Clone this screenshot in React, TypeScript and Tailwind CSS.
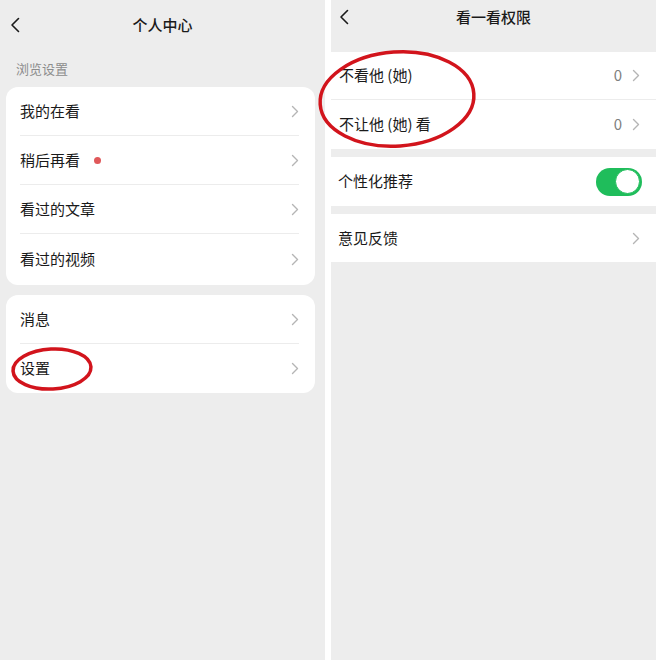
import React from 'react';

const font = { fontFamily: '"Noto Sans CJK SC", "Noto Sans", sans-serif' };

const Chevron: React.FC = () => (
  <svg width="8" height="13" viewBox="0 0 8 13" fill="none">
    <path d="M1.5 1.5 L6.5 6.5 L1.5 11.5" stroke="#b5b5b5" strokeWidth="1.4" strokeLinecap="round" strokeLinejoin="round" />
  </svg>
);

const BackArrow: React.FC = () => (
  <svg width="10" height="16" viewBox="0 0 10 16" fill="none">
    <path d="M8.5 1.5 L2 8 L8.5 14.5" stroke="#1a1a1a" strokeWidth="1.6" strokeLinecap="round" strokeLinejoin="round" />
  </svg>
);

const Row: React.FC<{ label: string; dot?: boolean; last?: boolean; h?: string }> = ({ label, dot, last, h = 'h-[49px]' }) => (
  <div className={`${h} flex items-center pl-[14px] pr-[16px]`}>
    <div className={`flex-1 h-full flex items-center ${last ? '' : 'border-b border-[#ececec]'}`}>
      <span className="text-[15px] text-[#1a1a1a]">{label}</span>
      {dot && <span className="ml-[14px] w-[7px] h-[7px] rounded-full bg-[#e0585a]" />}
      <span className="ml-auto pr-[0px]">
        <Chevron />
      </span>
    </div>
  </div>
);

const LeftPanel: React.FC = () => (
  <div className="w-[325px] h-full bg-[#ededed] flex flex-col">
    <div className="h-[50px] relative flex items-center justify-center">
      <span className="absolute left-[10px] top-[17px]">
        <BackArrow />
      </span>
      <span className="text-[15px] font-medium text-[#1a1a1a]">个人中心</span>
    </div>
    <div className="h-[37px] flex items-center pl-[16px] text-[13px] text-[#8c8c8c]">浏览设置</div>
    <div className="ml-[6px] w-[309px] bg-white rounded-[12px]">
      <Row label="我的在看" />
      <Row label="稍后再看" dot />
      <Row label="看过的文章" />
      <Row label="看过的视频" last h="h-[51px]" />
    </div>
    <div className="mt-[10px] ml-[6px] w-[309px] bg-white rounded-[12px]">
      <Row label="消息" />
      <Row label="设置" last />
    </div>
  </div>
);

const Toggle: React.FC = () => (
  <div className="w-[46px] h-[28px] rounded-full bg-[#1fbd5b] flex items-center justify-end pr-[2px]">
    <div className="w-[25px] h-[25px] rounded-full bg-white border-[1.5px] border-[#1fbd5b]" />
  </div>
);

const RightPanel: React.FC = () => (
  <div className="w-[325px] h-full bg-[#ededed] flex flex-col">
    <div className="h-[52px] relative">
      <span className="absolute left-[8px] top-[9px]">
        <BackArrow />
      </span>
      <div className="h-[34px] flex items-center justify-center text-[15px] font-medium text-[#1a1a1a]">看一看权限</div>
    </div>
    <div className="bg-white">
      <div className="h-[48px] pl-[8px] flex items-center border-b border-[#ececec]">
        <span className="text-[15px] text-[#1a1a1a]">不看他 (她)</span>
        <span className="ml-auto text-[15px] text-[#808080] mr-[10px]">0</span>
        <span className="mr-[16px]"><Chevron /></span>
      </div>
      <div className="h-[49px] pl-[8px] flex items-center">
        <span className="text-[15px] text-[#1a1a1a]">不让他 (她) 看</span>
        <span className="ml-auto text-[15px] text-[#808080] mr-[10px]">0</span>
        <span className="mr-[16px]"><Chevron /></span>
      </div>
    </div>
    <div className="mt-[8px] bg-white h-[49px] pl-[7px] pr-[14px] flex items-center">
      <span className="text-[15px] text-[#1a1a1a]">个性化推荐</span>
      <span className="ml-auto"><Toggle /></span>
    </div>
    <div className="mt-[8px] bg-white h-[48px] pl-[7px] flex items-center">
      <span className="text-[15px] text-[#1a1a1a]">意见反馈</span>
      <span className="ml-auto mr-[16px]"><Chevron /></span>
    </div>
  </div>
);

export default function App() {
  return (
    <div className="relative w-[660px] h-[660px] bg-white flex overflow-hidden" style={font}>
      <LeftPanel />
      <div className="w-[6px] h-full bg-white" />
      <RightPanel />
      <div className="w-[4px] h-full bg-white" />
      <svg className="absolute left-0 top-0 pointer-events-none" width="660" height="660" viewBox="0 0 660 660">
        <ellipse cx="52" cy="369" rx="39" ry="20" fill="none" stroke="#d2141c" strokeWidth="3.5" transform="rotate(-3 52 369)" />
        <ellipse cx="397" cy="99" rx="77" ry="47" fill="none" stroke="#d2141c" strokeWidth="3.5" transform="rotate(-4 397 99)" />
      </svg>
    </div>
  );
}
